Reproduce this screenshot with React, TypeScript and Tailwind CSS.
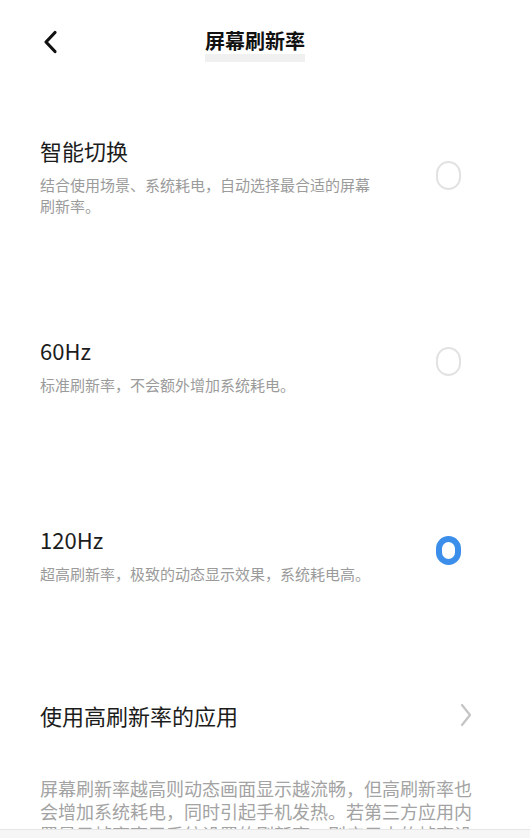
const font = { fontFamily: '"Noto Sans CJK SC", "Noto Sans", sans-serif' }

function Radio({ checked }: { checked?: boolean }) {
  return checked ? (
    <div className="w-[25px] h-[29px] rounded-full border-[6px] border-[#3b8eea]" />
  ) : (
    <div className="w-[25px] h-[29px] rounded-full border-[2.5px] border-[#e2e2e2]" />
  )
}

function Option({
  title,
  desc,
  checked,
  top,
  radioTop,
}: {
  title: string
  desc: string
  checked?: boolean
  top: string
  radioTop: string
}) {
  return (
    <div className={`flex items-start justify-between pl-[40px] pr-[69px] ${top}`}>
      <div className="flex flex-col">
        <div className="text-[22px] leading-[30px] text-[#1c1c1c]">{title}</div>
        <div className="mt-[9px] max-w-[340px] text-[15px] leading-[21px] text-[#9b9b9b]">{desc}</div>
      </div>
      <div className={radioTop}>
        <Radio checked={checked} />
      </div>
    </div>
  )
}

export default function App() {
  return (
    <div className="w-[530px] h-[838px] bg-white overflow-hidden flex flex-col" style={font}>
      <header className="flex items-start h-[62px] pt-[28px]">
        <svg className="ml-[42px] mt-[2px]" width="16" height="24" viewBox="0 0 16 24" fill="none">
          <path d="M13 2.5 L4 12 L13 21.5" stroke="#111" strokeWidth="3.2" strokeLinecap="round" strokeLinejoin="round" />
        </svg>
        <div className="ml-[147px] flex flex-col">
          <span className="text-[20px] leading-[26px] font-bold text-[#111]">屏幕刷新率</span>
          <span className="h-[8px] bg-[#f0f0f0]" />
        </div>
      </header>

      <Option
        top="mt-[73px]"
        radioTop="mt-[26px]"
        title="智能切换"
        desc="结合使用场景、系统耗电，自动选择最合适的屏幕刷新率。"
      />
      <Option
        top="mt-[119px]"
        radioTop="mt-[12px]"
        title="60Hz"
        desc="标准刷新率，不会额外增加系统耗电。"
      />
      <Option
        top="mt-[129px]"
        radioTop="mt-[12px]"
        title="120Hz"
        desc="超高刷新率，极致的动态显示效果，系统耗电高。"
        checked
      />

      <div className="mt-[116px] flex items-center justify-between pl-[40px] pr-[58px]">
        <span className="text-[22px] leading-[30px] text-[#1c1c1c]">使用高刷新率的应用</span>
        <svg width="12" height="24" viewBox="0 0 12 24" fill="none">
          <path d="M2 2 L10 12 L2 22" stroke="#c4c4c4" strokeWidth="2.2" strokeLinecap="round" strokeLinejoin="round" />
        </svg>
      </div>

      <div className="mt-[47px] h-[52px] overflow-hidden pl-[40px]">
        <p className="w-[436px] text-[18px] leading-[23px] text-[#a3a3a3]">
          屏幕刷新率越高则动态画面显示越流畅，但高刷新率也会增加系统耗电，同时引起手机发热。若第三方应用内置显示帧率高于系统设置的刷新率，则应用内的帧率设置将不生效。
        </p>
      </div>
      <div className="flex-1 bg-[#f6f6f6] border-t border-[#e6e6e6]" />
    </div>
  )
}
